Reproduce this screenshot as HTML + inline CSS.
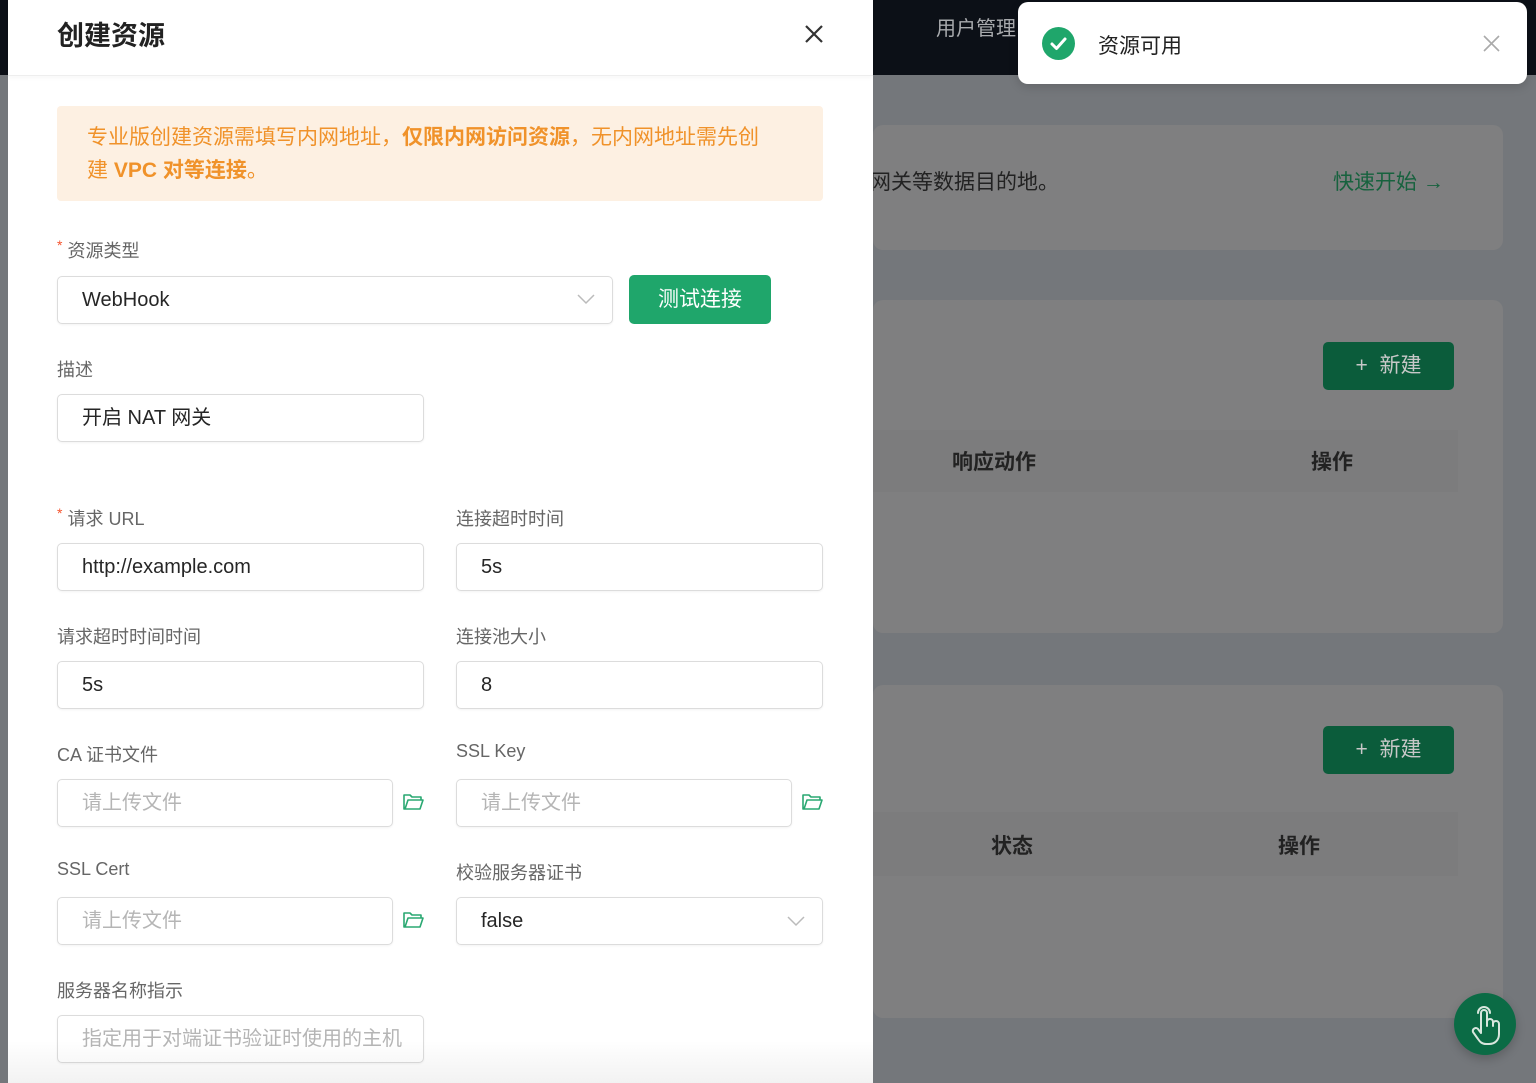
<!DOCTYPE html>
<html><head><meta charset="utf-8"><style>
*{box-sizing:border-box;margin:0;padding:0}
body{width:1536px;height:1083px;position:relative;overflow:hidden;background:#74777b;font-family:"Liberation Sans","Noto Sans CJK SC",sans-serif}
.a{position:absolute}
.nav{left:0;top:0;width:1536px;height:75px;background:#0c1017}
.card{background:#7f7f80;border-radius:10px}
.drawer{left:8px;top:0;width:865px;height:1083px;background:#fff}
.hdr{left:8px;top:0;width:865px;height:76px;border-bottom:1px solid #eee;box-shadow:0 2px 4px rgba(0,0,0,.03)}
.lbl{font-size:18px;color:#666;white-space:nowrap}
.req{color:#f5532d;font-size:14px;margin-right:5px;vertical-align:top}
.in{height:48px;border:1px solid #dcdcdc;border-radius:5px;background:#fff;font-size:20px;color:#262626;padding-left:24px;line-height:46px;white-space:nowrap;box-shadow:0 1px 2px rgba(0,0,0,.05)}
.ph{color:#b5b5b5}
.btn{background:#0b5c3b;border-radius:5px;color:#c8c8c8;font-size:21px;text-align:center;line-height:48px}
.th{font-size:21px;font-weight:bold;color:#222}
</style></head><body>
<div class="a nav"></div>
<div class="a" style="left:936px;top:12px;font-size:20px;color:#a9abae">用户管理</div>
<div class="a card" style="left:873px;top:125px;width:630px;height:125px"></div>
<div class="a" style="left:870px;top:166px;font-size:21px;color:#222">网关等数据目的地。</div>
<div class="a" style="left:1333px;top:166px;font-size:21px;color:#17623e">快速开始 →</div>
<div class="a card" style="left:873px;top:300px;width:630px;height:333px"></div>
<div class="a btn" style="left:1323px;top:342px;width:131px;height:48px">+&nbsp; 新建</div>
<div class="a" style="left:873px;top:430px;width:585px;height:62px;background:#7c7c7d"></div>
<div class="a th" style="left:952px;top:446px">响应动作</div>
<div class="a th" style="left:1311px;top:446px">操作</div>
<div class="a card" style="left:873px;top:685px;width:630px;height:333px"></div>
<div class="a btn" style="left:1323px;top:726px;width:131px;height:48px">+&nbsp; 新建</div>
<div class="a" style="left:873px;top:812px;width:585px;height:64px;background:#7c7c7d"></div>
<div class="a th" style="left:991px;top:830px">状态</div>
<div class="a th" style="left:1278px;top:830px">操作</div>
<div class="a" style="left:1454px;top:993px;width:62px;height:62px;border-radius:50%;background:#0b6b45;box-shadow:0 4px 10px rgba(0,0,0,.2)">
<svg width="62" height="62" viewBox="0 0 62 62" fill="none" stroke="#d8e6dd" stroke-width="2" stroke-linecap="round" stroke-linejoin="round"><path d="M24 20a6 6 0 0 1 12 0"/><path d="M27 40V20a3 3 0 0 1 6 0v13v-4a3 3 0 0 1 6 0v4v-2a3 3 0 0 1 6 0v10c0 6-4 10-10 10h-3c-4 0-6-2-8-5l-5-7a3 3 0 0 1 5-3z"/></svg></div>
<div class="a" style="left:0;top:0;width:8px;height:75px;background:#0c1017"></div>
<div class="a drawer"></div>
<div class="a hdr"></div>
<div class="a" style="left:57px;top:14px;font-size:27px;font-weight:bold;color:#222">创建资源</div>
<svg class="a" style="left:804px;top:24px" width="20" height="20" viewBox="0 0 20 20" stroke="#333" stroke-width="2.2"><path d="M2 2L18 18M18 2L2 18"/></svg>
<div class="a" style="left:57px;top:106px;width:766px;height:95px;background:#fdf0e2;border-radius:4px;padding:15px 30px;font-size:21px;line-height:33px;color:#f0922a;white-space:nowrap">专业版创建资源需填写内网地址，<b>仅限内网访问资源</b>，无内网地址需先创<br>建 <b>VPC 对等连接</b>。</div>
<div class="a lbl" style="left:57px;top:237px"><span class="req">*</span>资源类型</div>
<div class="a in" style="left:57px;top:276px;width:556px">WebHook</div>
<svg class="a" style="left:577px;top:293px" width="18" height="12" viewBox="0 0 18 12" fill="none" stroke="#bbb" stroke-width="1.5"><path d="M1 2l8 8 8-8"/></svg>
<div class="a" style="left:629px;top:275px;width:142px;height:49px;background:#1fa66b;border-radius:5px;color:#fff;font-size:21px;text-align:center;line-height:49px">测试连接</div>
<div class="a lbl" style="left:57px;top:356px">描述</div>
<div class="a in" style="left:57px;top:394px;width:367px">开启 NAT 网关</div>
<div class="a lbl" style="left:57px;top:505px"><span class="req">*</span>请求 URL</div>
<div class="a in" style="left:57px;top:543px;width:367px">http://example.com</div>
<div class="a lbl" style="left:456px;top:505px">连接超时时间</div>
<div class="a in" style="left:456px;top:543px;width:367px">5s</div>
<div class="a lbl" style="left:57px;top:623px">请求超时时间时间</div>
<div class="a in" style="left:57px;top:661px;width:367px">5s</div>
<div class="a lbl" style="left:456px;top:623px">连接池大小</div>
<div class="a in" style="left:456px;top:661px;width:367px">8</div>
<div class="a lbl" style="left:57px;top:741px">CA 证书文件</div>
<div class="a in ph" style="left:57px;top:779px;width:336px">请上传文件</div>
<div class="a lbl" style="left:456px;top:741px">SSL Key</div>
<div class="a in ph" style="left:456px;top:779px;width:336px">请上传文件</div>
<div class="a lbl" style="left:57px;top:859px">SSL Cert</div>
<div class="a in ph" style="left:57px;top:897px;width:336px">请上传文件</div>
<div class="a lbl" style="left:456px;top:859px">校验服务器证书</div>
<div class="a in" style="left:456px;top:897px;width:367px">false</div>
<svg class="a" style="left:787px;top:915px" width="18" height="12" viewBox="0 0 18 12" fill="none" stroke="#bbb" stroke-width="1.5"><path d="M1 2l8 8 8-8"/></svg>
<div class="a lbl" style="left:57px;top:977px">服务器名称指示</div>
<div class="a in ph" style="left:57px;top:1015px;width:367px">指定用于对端证书验证时使用的主机</div>
<svg class="a" style="left:403px;top:793px" width="21" height="18" viewBox="0 0 21 18" fill="none" stroke="#2aa872" stroke-width="1.6" stroke-linejoin="round"><path d="M1 2h6l2 2h9v3H5L2 16H1zM5 7h15l-3 9H2"/></svg>
<svg class="a" style="left:802px;top:793px" width="21" height="18" viewBox="0 0 21 18" fill="none" stroke="#2aa872" stroke-width="1.6" stroke-linejoin="round"><path d="M1 2h6l2 2h9v3H5L2 16H1zM5 7h15l-3 9H2"/></svg>
<svg class="a" style="left:403px;top:911px" width="21" height="18" viewBox="0 0 21 18" fill="none" stroke="#2aa872" stroke-width="1.6" stroke-linejoin="round"><path d="M1 2h6l2 2h9v3H5L2 16H1zM5 7h15l-3 9H2"/></svg>
<div class="a" style="left:8px;top:1040px;width:865px;height:43px;background:linear-gradient(rgba(0,0,0,0),rgba(0,0,0,.05))"></div>
<div class="a" style="left:1018px;top:2px;width:509px;height:82px;background:#fff;border-radius:10px;box-shadow:0 3px 10px rgba(0,0,0,.15)"></div>
<div class="a" style="left:1042px;top:27px;width:33px;height:33px;border-radius:50%;background:#1fa66b"><svg width="33" height="33" viewBox="0 0 33 33" fill="none" stroke="#fff" stroke-width="3" stroke-linecap="round" stroke-linejoin="round"><path d="M10 17l4.5 4.5L23 12"/></svg></div>
<div class="a" style="left:1098px;top:30px;font-size:21px;color:#222">资源可用</div>
<svg class="a" style="left:1483px;top:35px" width="17" height="17" viewBox="0 0 17 17" stroke="#aaa" stroke-width="1.6"><path d="M1 1L16 16M16 1L1 16"/></svg>
</body></html>
